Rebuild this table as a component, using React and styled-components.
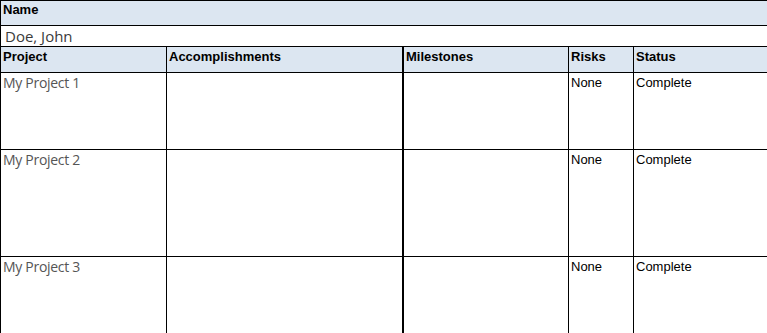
import styled, { createGlobalStyle } from 'styled-components';

const GlobalStyle = createGlobalStyle`
    html, body {
        margin: 0;
        padding: 0;
        background: #fff;
        overflow: hidden;
    }
`;

const Sheet = styled.div`
    width: 820px;
    height: 333px;
    overflow: hidden;
    border-top: 1px solid #000;
    border-left: 1px solid #000;
    font-family: "Liberation Sans", Arial, sans-serif;
    color: #000;
`;

const NameBar = styled.div`
    height: 25px;
    background: #dce6f1;
    border-bottom: 1px solid #000;
    padding: 1px 0 0 2px;
    box-sizing: border-box;
    font-size: 13px;
    font-weight: bold;
    line-height: 15px;
`;

const NameValue = styled.div`
    height: 21px;
    border-bottom: 1px solid #000;
    box-sizing: border-box;
    padding: 0 0 0 4px;
    font-family: "Open Sans", "Noto Sans", sans-serif;
    font-size: 15px;
    line-height: 20px;
    color: #3a3a3a;
`;

const Grid = styled.div`
    display: grid;
    grid-template-columns: 166px 237px 165px 65px 1fr;
    grid-template-rows: 26px 77px 107px 100px;
`;

const Cell = styled.div`
    box-sizing: border-box;
    border-right: ${(p) => (p.$thick ? 2 : 1)}px solid #000;
    border-bottom: 1px solid #000;
    padding: 2px 0 0 2px;
    background: ${(p) => (p.$head ? '#dce6f1' : '#fff')};
    font-size: 13px;
    font-weight: ${(p) => (p.$head ? 'bold' : 'normal')};
    line-height: 15px;
    overflow: hidden;
    white-space: nowrap;
`;

const ProjectName = styled.span`
    display: block;
    margin-top: -1px;
    font-family: "Open Sans", "Noto Sans", sans-serif;
    font-size: 14px;
    letter-spacing: -0.3px;
    line-height: 18px;
    color: #555;
`;

const headers = ['Project', 'Accomplishments', 'Milestones', 'Risks', 'Status'];

const projects = [
    { id: 1, name: 'My Project 1', risks: 'None', status: 'Complete' },
    { id: 2, name: 'My Project 2', risks: 'None', status: 'Complete' },
    { id: 3, name: 'My Project 3', risks: 'None', status: 'Complete' },
];

const App = () => {
    return (
        <>
            <GlobalStyle />
            <Sheet>
                <NameBar>Name</NameBar>
                <NameValue>Doe, John</NameValue>
                <Grid>
                    {headers.map((h, i) => (
                        <Cell key={h} $head $thick={i === 1}>{h}</Cell>
                    ))}
                    {projects.map((p) => [
                        <Cell key={p.id + 'n'}><ProjectName>{p.name}</ProjectName></Cell>,
                        <Cell key={p.id + 'a'} $thick />,
                        <Cell key={p.id + 'm'} />,
                        <Cell key={p.id + 'r'}>{p.risks}</Cell>,
                        <Cell key={p.id + 's'}>{p.status}</Cell>,
                    ])}
                </Grid>
            </Sheet>
        </>
    );
};

export default App;
